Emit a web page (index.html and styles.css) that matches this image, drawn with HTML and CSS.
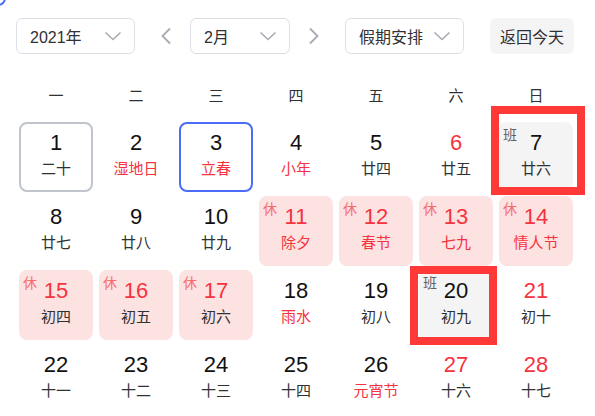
FILE: index.html
```html
<!DOCTYPE html>
<html lang="zh-CN">
<head>
<meta charset="utf-8">
<title>日历</title>
<link rel="stylesheet" href="styles.css">
</head>
<body>
<div class="page">
  <div class="corner-arc"></div>
  <div class="toolbar">
    <div class="select year"><span>2021年</span><svg class="chev" viewBox="0 0 18 10"><path d="M1.5 1.5 L9 8.5 L16.5 1.5" /></svg></div>
    <div class="arrow prev"><svg viewBox="0 0 12 18"><path d="M10 1.5 L2.5 9 L10 16.5" /></svg></div>
    <div class="select month"><span>2月</span><svg class="chev" viewBox="0 0 18 10"><path d="M1.5 1.5 L9 8.5 L16.5 1.5" /></svg></div>
    <div class="arrow next"><svg viewBox="0 0 12 18"><path d="M2 1.5 L9.5 9 L2 16.5" /></svg></div>
    <div class="select holiday"><span>假期安排</span><svg class="chev" viewBox="0 0 18 10"><path d="M1.5 1.5 L9 8.5 L16.5 1.5" /></svg></div>
    <div class="btn">返回今天</div>
  </div>

  <div class="weekdays">
    <div>一</div><div>二</div><div>三</div><div>四</div><div>五</div><div>六</div><div>日</div>
  </div>

  <div class="grid">
    <div class="cell today"><div class="num">1</div><div class="lunar">二十</div></div>
    <div class="cell"><div class="num">2</div><div class="lunar red">湿地日</div></div>
    <div class="cell selected"><div class="num">3</div><div class="lunar red">立春</div></div>
    <div class="cell"><div class="num">4</div><div class="lunar red">小年</div></div>
    <div class="cell"><div class="num">5</div><div class="lunar">廿四</div></div>
    <div class="cell"><div class="num red">6</div><div class="lunar">廿五</div></div>
    <div class="cell work"><span class="tag">班</span><div class="num">7</div><div class="lunar">廿六</div></div>

    <div class="cell"><div class="num">8</div><div class="lunar">廿七</div></div>
    <div class="cell"><div class="num">9</div><div class="lunar">廿八</div></div>
    <div class="cell"><div class="num">10</div><div class="lunar">廿九</div></div>
    <div class="cell rest"><span class="tag">休</span><div class="num red">11</div><div class="lunar red">除夕</div></div>
    <div class="cell rest"><span class="tag">休</span><div class="num red">12</div><div class="lunar red">春节</div></div>
    <div class="cell rest"><span class="tag">休</span><div class="num red">13</div><div class="lunar red">七九</div></div>
    <div class="cell rest"><span class="tag">休</span><div class="num red">14</div><div class="lunar red">情人节</div></div>

    <div class="cell rest"><span class="tag">休</span><div class="num red">15</div><div class="lunar">初四</div></div>
    <div class="cell rest"><span class="tag">休</span><div class="num red">16</div><div class="lunar">初五</div></div>
    <div class="cell rest"><span class="tag">休</span><div class="num red">17</div><div class="lunar">初六</div></div>
    <div class="cell"><div class="num">18</div><div class="lunar red">雨水</div></div>
    <div class="cell"><div class="num">19</div><div class="lunar">初八</div></div>
    <div class="cell work"><span class="tag">班</span><div class="num">20</div><div class="lunar">初九</div></div>
    <div class="cell"><div class="num red">21</div><div class="lunar">初十</div></div>

    <div class="cell"><div class="num">22</div><div class="lunar">十一</div></div>
    <div class="cell"><div class="num">23</div><div class="lunar">十二</div></div>
    <div class="cell"><div class="num">24</div><div class="lunar">十三</div></div>
    <div class="cell"><div class="num">25</div><div class="lunar">十四</div></div>
    <div class="cell"><div class="num">26</div><div class="lunar red">元宵节</div></div>
    <div class="cell"><div class="num red">27</div><div class="lunar">十六</div></div>
    <div class="cell"><div class="num red">28</div><div class="lunar">十七</div></div>
  </div>

  <div class="frame frame-a"></div>
  <div class="frame frame-b"></div>
</div>
</body>
</html>
```

FILE: styles.css
```css
* { box-sizing: border-box; }
html, body { margin: 0; padding: 0; background: #fff; }
body {
  font-family: "Liberation Sans", "Noto Sans CJK SC", sans-serif;
  color: #303133;
  width: 595px;
  height: 416px;
  overflow: hidden;
}
.page {
  position: relative;
  padding: 18px 16px 0 16px;
  height: 416px;
  overflow: hidden;
}
.corner-arc {
  position: absolute;
  left: -22px;
  top: -22px;
  width: 28px;
  height: 28px;
  border: 2px solid #4a6cf7;
  border-radius: 8px;
}
.toolbar {
  display: flex;
  align-items: center;
  height: 36px;
}
.select {
  height: 36px;
  border: 1px solid #dcdfe6;
  border-radius: 6px;
  display: flex;
  align-items: center;
  justify-content: space-between;
  padding: 0 12px 0 13px;
  font-size: 16px;
  color: #303133;
}
.select.year { width: 119px; }
.select.month { width: 100px; margin-left: 18px; }
.select.holiday { width: 119px; margin-left: 25px; padding-right: 12px; }
.chev {
  width: 18px;
  height: 10px;
  fill: none;
  stroke: #a8abb2;
  stroke-width: 1.6;
}
.arrow {
  width: 12px;
  height: 18px;
  display: flex;
}
.arrow svg {
  width: 12px;
  height: 18px;
  fill: none;
  stroke: #a8abb2;
  stroke-width: 1.8;
}
.arrow.prev { margin-left: 25px; }
.arrow.next { margin-left: 18px; }
.btn {
  margin-left: 26px;
  height: 36px;
  width: 84px;
  border-radius: 6px;
  background: #f4f4f5;
  display: flex;
  align-items: center;
  justify-content: center;
  font-size: 16px;
  color: #303133;
}
.weekdays {
  margin-top: 18px;
  display: grid;
  grid-template-columns: repeat(7, 80px);
  height: 48px;
}
.weekdays div {
  text-align: center;
  line-height: 48px;
  font-size: 15px;
  color: #303133;
}
.grid {
  display: grid;
  grid-template-columns: repeat(7, 80px);
  grid-auto-rows: 74px;
}
.cell {
  position: relative;
  margin: 2px 3px;
  border: 2px solid transparent;
  border-radius: 8px;
  padding-top: 5px;
  display: flex;
  flex-direction: column;
  align-items: center;
}
.cell.today { border-color: #c0c4cc; }
.cell.selected { border-color: #4a6cf7; }
.cell.rest { background: #fde2e2; }
.cell.work { background: #f4f4f5; }
.num {
  font-size: 22px;
  line-height: 28px;
  color: #111;
}
.lunar {
  font-size: 15px;
  line-height: 24px;
  color: #303133;
}
.red { color: #f5333f; }
.num.red { color: #f5333f; }
.tag {
  position: absolute;
  left: 2px;
  top: 3px;
  font-size: 14px;
  line-height: 16px;
}
.rest .tag { color: #f56c6c; }
.work .tag { color: #606266; }
.frame {
  position: absolute;
  border: 8px solid #ff3838;
}
.frame-a { left: 491px; top: 106px; width: 94px; height: 89px; }
.frame-b { left: 410px; top: 266px; width: 87px; height: 79px; }
```
